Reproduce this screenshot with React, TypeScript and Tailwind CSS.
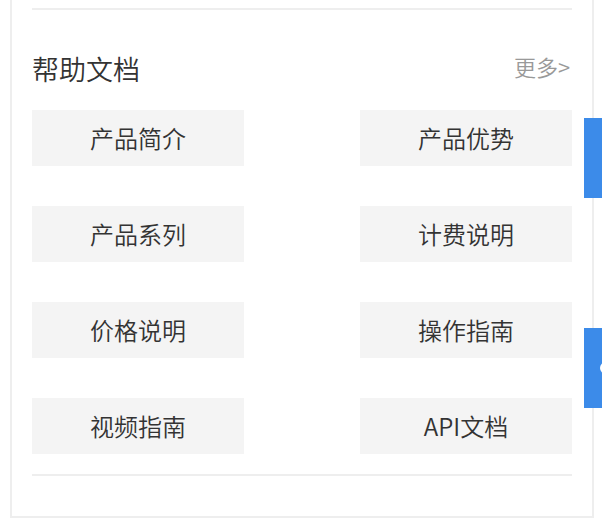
import React from 'react';

const docs = ['产品简介', '产品优势', '产品系列', '计费说明', '价格说明', '操作指南', '视频指南', 'API文档'];

export default function App() {
    return (
        <div
            className="relative w-[602px] h-[528px] overflow-hidden bg-white font-[350]"
            style={{ fontFamily: '"Noto Sans CJK SC", "Noto Sans", sans-serif' }}
        >
            {/* Help docs card */}
            <div className="ml-[10px] w-[584px] border-x-2 border-b-2 border-[#eeeeee] px-[20px] pt-[8px] pb-[40px]">
                <div className="h-[2px] bg-[#eeeeee]" />

                {/* Header */}
                <div className="h-[100px] pt-[16px] flex items-center justify-between">
                    <h2 className="text-[27px] leading-none text-[#333333]">帮助文档</h2>
                    <a className="text-[22px] leading-none text-[#999999] pb-[5px] pr-[2px] cursor-pointer">更多&gt;</a>
                </div>

                {/* Links */}
                <div className="grid grid-cols-[212px_212px] justify-between gap-y-[40px]">
                    {docs.map((name) => (
                        <button
                            key={name}
                            className="h-[56px] flex items-center justify-center bg-[#f4f4f4] text-[24px] leading-none text-[#333333]"
                        >
                            {name}
                        </button>
                    ))}
                </div>

                <div className="mt-[20px] h-[2px] bg-[#eeeeee]" />
            </div>

            {/* Floating side tabs */}
            <div className="absolute right-0 top-[118px] w-[18px] h-[80px] bg-[#3c8be9]" />
            <div className="absolute right-0 top-[328px] w-[18px] h-[80px] bg-[#3c8be9] overflow-hidden">
                <div className="absolute left-[16px] top-[34px] w-[12px] h-[12px] rounded-full border-2 border-white" />
            </div>
        </div>
    );
}
